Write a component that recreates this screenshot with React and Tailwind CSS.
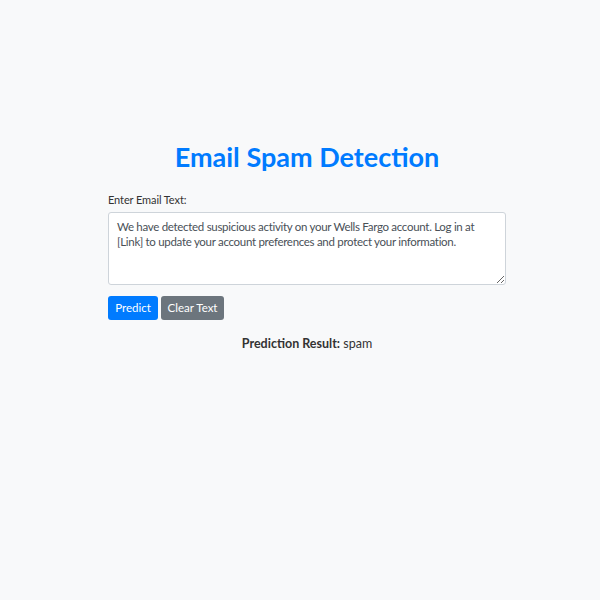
export default function App() {
    return (
        <div className="min-h-screen bg-[#f8f9fa] font-['Lato',sans-serif] text-[#212529]">
            <div className="ml-[108px] w-[398px] pt-[138px]">
                {/* Title */}
                <h1 className="text-center text-[27px] font-bold leading-[38px] text-[#007bff]">Email Spam Detection</h1>

                {/* Form */}
                <div className="mt-[16px]">
                    <label className="block text-[11px] leading-[16px] tracking-[-0.1px] text-[#333]">Enter Email Text:</label>
                    <textarea
                        className="mt-[4px] block h-[73px] w-full resize-y rounded-[3px] border border-[#ced4da] bg-white px-[8px] py-[6px] text-[11.5px] leading-[15px] tracking-[-0.3px] text-[#495057] outline-none"
                        defaultValue="We have detected suspicious activity on your Wells Fargo account. Log in at [Link] to update your account preferences and protect your information."
                    />
                    <div className="mt-[11px] flex gap-[3px]">
                        <button className="h-[24px] w-[50px] rounded-[3px] bg-[#007bff] text-[11.5px] text-white">Predict</button>
                        <button className="h-[24px] w-[63px] rounded-[3px] bg-[#6c757d] text-[11.5px] text-white">Clear Text</button>
                    </div>
                </div>

                {/* Result */}
                <p className="mt-[15px] text-center text-[12.5px] leading-[18px] text-[#333]">
                    <span className="font-bold">Prediction Result:</span> spam
                </p>
            </div>
        </div>
    );
}
